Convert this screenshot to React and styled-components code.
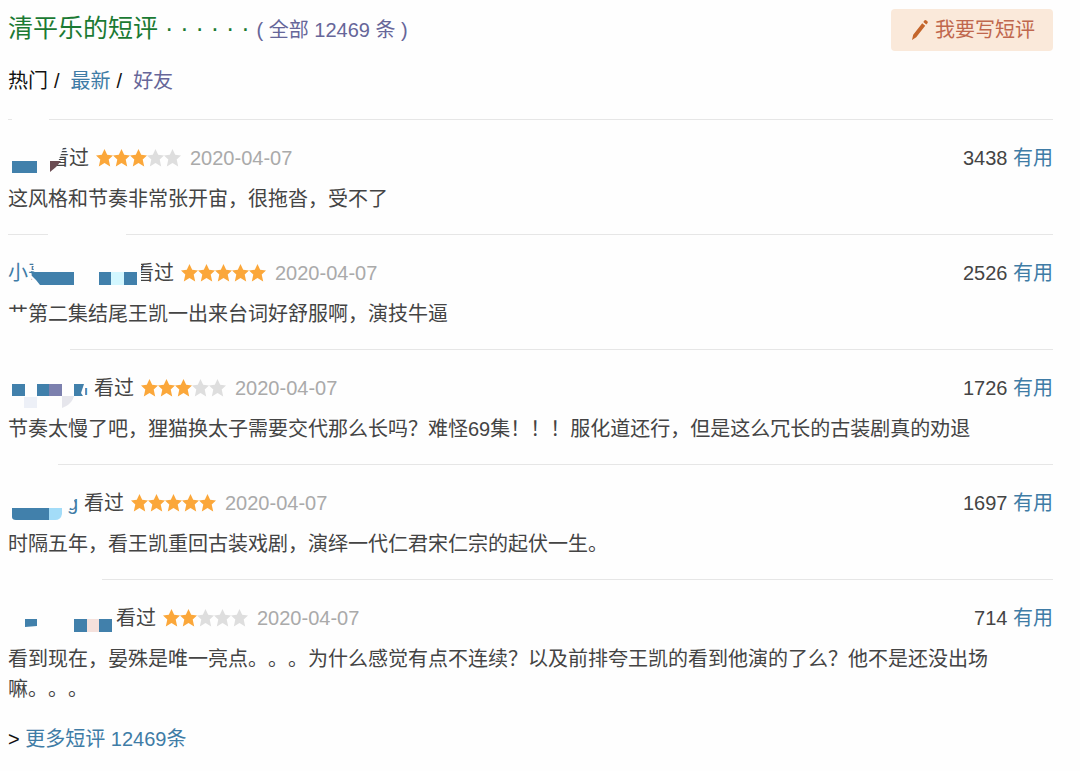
import React from 'react';
import styled, { createGlobalStyle } from 'styled-components';

const GlobalStyle = createGlobalStyle`
    body {
        margin: 0;
        background: #fefefe;
        color: #111;
        font: 20px/30px "Liberation Sans", "Noto Sans CJK SC", sans-serif;
        text-spacing-trim: space-all;
    }
`;

const Page = styled.main`
    padding: 9px 27px 16px 8px;
`;

const Header = styled.header`
    display: flex;
    justify-content: space-between;
    align-items: flex-start;
`;

const Title = styled.h2`
    margin: 0;
    color: #1b7a33;
    font-size: 25px;
    font-weight: 400;
    line-height: 38px;
`;

const Total = styled.span`
    color: #666699;
    font-size: 20px;
`;

const Link = styled.a`
    color: ${props => props.$visited ? '#666699' : '#3f7ca6'};
    text-decoration: none;
`;

const WriteButton = styled.button`
    display: flex;
    align-items: center;
    gap: 5px;
    height: 42px;
    padding: 0 18px;
    border: 0;
    border-radius: 4px;
    background: #fae9da;
    color: #c0674d;
    font: inherit;
    cursor: pointer;
`;

const Tabs = styled.nav`
    margin: 15px 0 23px;
`;

const Slash = styled.span`
    margin: 0 11px 0 6px;
`;

const List = styled.ul`
    margin: 0;
    padding: 0;
    list-style: none;
`;

const Item = styled.li`
    position: relative;
    padding: 23px 0 20px;
    border-top: 1px solid #e6e6e6;
`;

const ItemHead = styled.div`
    display: flex;
    align-items: center;
    color: #444;
`;

const UserName = styled(Link)`
    width: ${props => props.$width}px;
    height: 30px;
    margin-right: 6px;
    text-align: ${props => props.$align || 'left'};
`;

const Stars = styled.svg`
    width: 85px;
    height: 18px;
    margin: 0 9px 0 7px;
`;

const DateText = styled.time`
    color: #aaa;
`;

const Votes = styled.div`
    margin-left: auto;
`;

const Text = styled.p`
    margin: 11px 0 0;
    padding-right: 48px;
    color: #444;
`;

// sits over the user name and hides most of it
const Mosaic = styled.svg`
    position: absolute;
    top: -2px;
    left: 0;
    width: 150px;
    height: 62px;
    pointer-events: none;
`;

const blue = '#4180ab';
const white = '#fefefe';

const comments = [
    {
        name: '', width: 35, stars: 3, votes: 3438,
        text: '这风格和节奏非常张开宙，很拖沓，受不了',
        mosaic: (
            <>
                <path fill={white} d="M4 0H41V4H4zM38 26H56L53 36L48 49L42 55H38z" />
                <path fill={blue} d="M4 43H29V55H4z" />
                <path fill="#6b4c52" d="M42 43H53L48 49L42 54z" />
            </>
        ),
    },
    {
        name: '小哥', width: 120, stars: 5, votes: 2526,
        text: '艹第二集结尾王凯一出来台词好舒服啊，演技牛逼',
        mosaic: (
            <>
                <path fill={white} d="M40 0H118V4H40zM25 26H50V54H30L22 44L26 40z" />
                <path fill={white} d="M126 26H133V54H126z" />
                <path fill={blue} d="M23 38L27 39H66V52H32L28 47L24 43z" />
                <path fill={blue} d="M91 39H103V52H91zM116 39H129V52H116z" />
                <path fill="#d3f7ff" d="M103 39H116V52H103z" />
            </>
        ),
    },
    {
        name: 'n', width: 80, align: 'right', stars: 3, votes: 1726,
        text: '节奏太慢了吧，狸猫换太子需要交代那么长吗？难怪69集！！！服化道还行，但是这么冗长的古装剧真的劝退',
        mosaic: (
            <>
                <path fill={white} d="M0 0H62V4H0zM66 30H80V40H77V50H66z" />
                <path fill={blue} d="M4 36H17V48H4zM29 36H41V48H29zM66 36H76L74 42L73 45L75 48H66z" />
                <path fill="#7c80ae" d="M41 36H54V48H41z" />
                <path fill="#edf0f7" d="M16 49H29V60H16z" />
                <path fill="#e6e6ec" d="M54 48H66C65 53 60 58 54 60z" />
            </>
        ),
    },
    {
        name: 'g', width: 70, align: 'right', stars: 5, votes: 1697,
        text: '时隔五年，看王凯重回古装戏剧，演绎一代仁君宋仁宗的起伏一生。',
        mosaic: (
            <>
                <path fill={white} d="M0 0H50V4H0zM56 28H66V42L60 47H56z" />
                <path fill={blue} d="M4 45H41V57H8Q4 57 4 54z" />
                <path fill="#a3dcf8" d="M41 45H54V51Q53 57 47 57H41z" />
            </>
        ),
    },
    {
        name: '', width: 102, stars: 2, votes: 714,
        text: '看到现在，晏殊是唯一亮点。。。为什么感觉有点不连续？以及前排夸王凯的看到他演的了么？他不是还没出场嘛。。。',
        mosaic: (
            <>
                <path fill={white} d="M0 0H94V4H0z" />
                <path fill={blue} d="M17 41H29V48L17 49zM66 41H79V54H66zM91 41H104V54H91z" />
                <path fill="#f5e1dc" d="M79 41H91V54H79z" />
            </>
        ),
    },
];

function Rating({ value }) {
    return (
        <Stars viewBox="0 0 85 18" role="img" aria-label={`${value}/5`}>
            {[0, 1, 2, 3, 4].map(i => (
                <path
                    key={i}
                    transform={`translate(${i * 17} 0)`}
                    fill={i < value ? '#fba73a' : '#dedede'}
                    d="M8.5 0L11.2 5.8L17 6.4L12.7 10.6L14.2 17.4L8.5 14L2.8 17.4L4.3 10.6L0 6.4L5.8 5.8z"
                />
            ))}
        </Stars>
    );
}

function Comment({ data }) {
    return (
        <Item>
            <ItemHead>
                <UserName href="#" $width={data.width} $align={data.align}>{data.name}</UserName>
                <span>看过</span>
                <Rating value={data.stars} />
                <DateText dateTime="2020-04-07">2020-04-07</DateText>
                <Votes>{data.votes} <Link href="#">有用</Link></Votes>
            </ItemHead>
            <Text>{data.text}</Text>
            <Mosaic viewBox="0 0 150 62" aria-hidden="true">{data.mosaic}</Mosaic>
        </Item>
    );
}

export default function App() {
    return (
        <Page>
            <GlobalStyle />
            <Header>
                <Title>
                    清平乐的短评 · · · · · · <Total>( <Link href="#" $visited>全部 12469 条</Link> )</Total>
                </Title>
                <WriteButton type="button">
                    <svg width="21" height="22" viewBox="0 0 21 22" aria-hidden="true">
                        <path fill="#c4652b" d="M13.2 4.2L16.2 6.8L7.2 18.2L3 21L4.2 15.8zM14.3 2.9L15.6 1.3Q16.4 .6 17.4 1.4L18.4 2.3Q19.2 3.2 18.6 4L17.3 5.5z" />
                    </svg>
                    我要写短评
                </WriteButton>
            </Header>
            <Tabs>
                热门<Slash>/</Slash>
                <Link href="#">最新</Link><Slash>/</Slash>
                <Link href="#" $visited>好友</Link>
            </Tabs>
            <List>
                {comments.map(item => <Comment key={item.votes} data={item} />)}
            </List>
            &gt; <Link href="#">更多短评 12469条</Link>
        </Page>
    );
}
